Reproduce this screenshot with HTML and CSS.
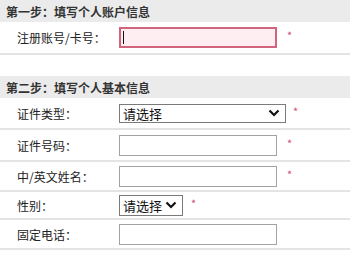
FILE: index.html
```html
<!DOCTYPE html>
<html lang="zh">
<head>
<meta charset="utf-8">
<link rel="stylesheet" href="styles.css">
</head>
<body>
<div class="form">
  <div class="step">第一步：填写个人账户信息</div>
  <div class="row h33">
    <span class="label">注册账号/卡号：</span>
    <span class="field-wrap"><input class="text focus" type="text"><span class="caret"></span></span>
    <span class="star">*</span>
  </div>

  <div class="step step2">第二步：填写个人基本信息</div>
  <div class="row h32">
    <span class="label">证件类型：</span>
    <span class="select wide">请选择<svg class="chev" width="12" height="8" viewBox="0 0 12 8"><path d="M1.5 1.5 L6 6 L10.5 1.5" fill="none" stroke="#111" stroke-width="2.2"/></svg></span>
    <span class="star">*</span>
  </div>
  <div class="row h32">
    <span class="label">证件号码：</span>
    <input class="text" type="text">
    <span class="star">*</span>
  </div>
  <div class="row h30">
    <span class="label">中/英文姓名：</span>
    <input class="text" type="text">
    <span class="star">*</span>
  </div>
  <div class="row h28">
    <span class="label">性别：</span>
    <span class="select narrow">请选择<svg class="chev" width="12" height="8" viewBox="0 0 12 8"><path d="M1.5 1.5 L6 6 L10.5 1.5" fill="none" stroke="#111" stroke-width="2.2"/></svg></span>
    <span class="star">*</span>
  </div>
  <div class="row h30">
    <span class="label">固定电话：</span>
    <input class="text" type="text">
  </div>
</div>
</body>
</html>
```
FILE: styles.css
```css
* { box-sizing: border-box; }
body {
  margin: 0;
  background: #fff;
  font-family: "Noto Sans CJK SC", "Noto Sans", sans-serif;
  font-size: 12px;
  color: #333;
}
.form { width: 350px; }
.step {
  height: 22px;
  background: #ebebeb;
  font-weight: bold;
  color: #333;
  padding-left: 6px;
  display: flex;
  align-items: center;
  font-size: 12px;
}
.step2 { margin-top: 21px; }
.row {
  display: flex;
  align-items: center;
  padding-left: 17px;
  border-bottom: 2px solid #e4e4e4;
}
.h33 { height: 33px; }
.h32 { height: 32px; }
.h30 { height: 30px; }
.h28 { height: 28px; }
.label {
  width: 102px;
  color: #222;
}
.text {
  width: 158px;
  height: 21px;
  border: 1px solid #a2a2a2;
  background: #fff;
  margin: 0;
  padding: 0;
  outline: none;
}
.text.focus {
  background: #ffeef1;
  border: 2px solid #d0657d;
  display: block;
}
.field-wrap { position: relative; display: block; }
.caret {
  position: absolute;
  left: 4px;
  top: 4px;
  width: 1px;
  height: 13px;
  background: #111;
}
.star {
  color: #d0506a;
  font-size: 11px;
  margin-left: 10px;
  line-height: 1;
  position: relative;
  top: -2px;
}
.select {
  display: flex;
  align-items: center;
  justify-content: space-between;
  border: 1px solid #7a7a7a;
  background: #fff;
  font-size: 13px;
  color: #111;
  padding: 0 5px 0 3px;
}
.select.wide { width: 167px; height: 19px; }
.select.narrow { width: 64px; height: 21px; }
.select.narrow + .star { margin-left: 8px; }
.select.wide + .star { margin-left: 7px; }
.chev { flex: none; }
```
